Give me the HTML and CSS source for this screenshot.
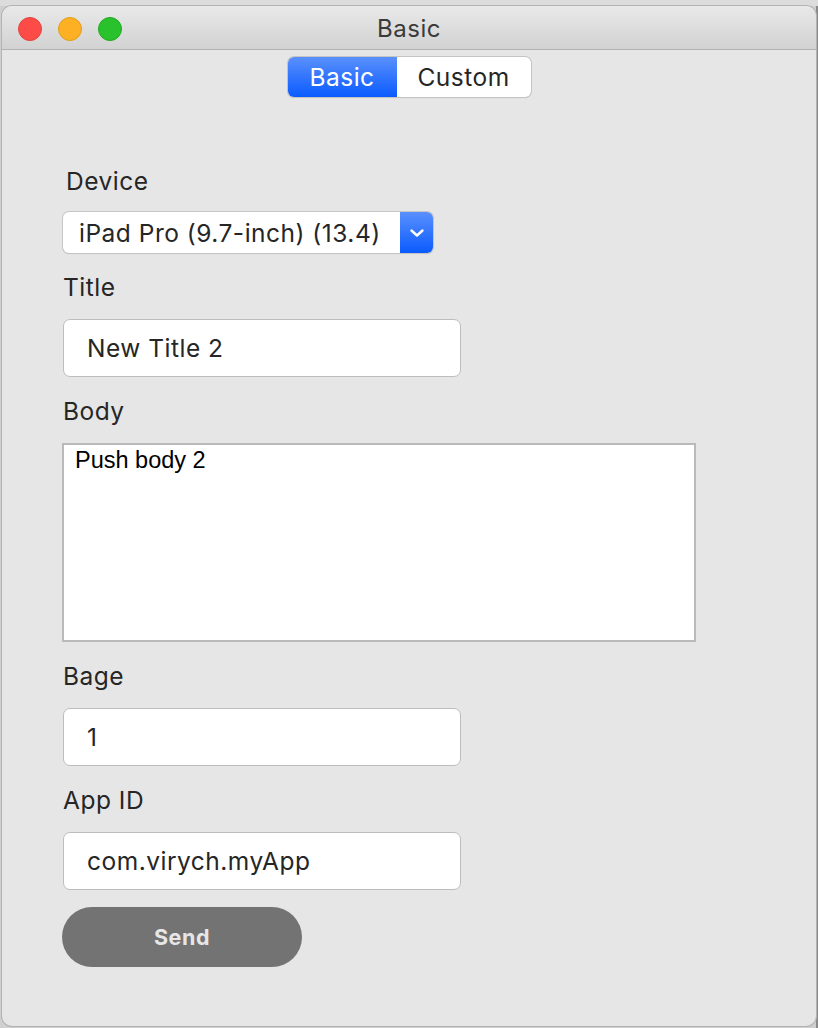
FILE: index.html
```html
<!DOCTYPE html>
<html>
<head>
<meta charset="utf-8">
<link rel="stylesheet" href="styles.css">
</head>
<body>
<div class="backdrop">
  <div class="bg-top"></div>
  <div class="window">
    <div class="titlebar">
      <div class="lights">
        <span class="light red"></span>
        <span class="light yellow"></span>
        <span class="light green"></span>
      </div>
      <div class="title">Basic</div>
    </div>
    <div class="content">
      <div class="segments">
        <div class="seg active">Basic</div>
        <div class="seg">Custom</div>
      </div>
      <form class="form">
        <div class="label label-device">Device</div>
        <div class="select">
          <div class="select-text">iPad Pro (9.7-inch) (13.4)</div>
          <div class="select-arrow">
            <svg width="16" height="10" viewBox="0 0 16 10"><path d="M2.5 2.5 L8 7.5 L13.5 2.5" fill="none" stroke="#fff" stroke-width="2.4" stroke-linecap="round" stroke-linejoin="round"/></svg>
          </div>
        </div>
        <div class="label">Title</div>
        <div class="input">New Title 2</div>
        <div class="label">Body</div>
        <div class="textarea">Push body 2</div>
        <div class="label">Bage</div>
        <div class="input">1</div>
        <div class="label">App ID</div>
        <div class="input">com.virych.myApp</div>
        <div class="send">Send</div>
      </form>
    </div>
  </div>
</div>
</body>
</html>
```
FILE: styles.css
```css
html, body {
  margin: 0;
  padding: 0;
}
body {
  width: 818px;
  height: 1028px;
  overflow: hidden;
  background: #d9d9d9;
  font-family: Inter, "Noto Sans", "Liberation Sans", sans-serif;
}
.backdrop {
  position: relative;
  width: 818px;
  height: 1028px;
  background: linear-gradient(to right, #cfcfcf 0, #cfcfcf 816px, #8a8a8a 816px);
}
.bg-top {
  position: absolute;
  left: 0;
  top: 0;
  width: 818px;
  height: 6px;
  background: #dcdcdc;
}
.window {
  position: absolute;
  left: 2px;
  top: 6px;
  width: 814px;
  height: 1020px;
  border-radius: 10px;
  background: #e6e6e6;
  overflow: hidden;
  box-shadow: 0 0 0 1px #b3b3b3;
  display: flex;
  flex-direction: column;
}
.titlebar {
  position: relative;
  height: 43px;
  flex: none;
  background: linear-gradient(#e9e9e9, #d2d2d2);
  border-bottom: 1px solid #b1b1b1;
  display: flex;
  align-items: center;
  justify-content: center;
}
.lights {
  position: absolute;
  left: 16px;
  top: 11px;
  display: flex;
  gap: 16px;
}
.light {
  width: 24px;
  height: 24px;
  border-radius: 50%;
  box-sizing: border-box;
}
.red { background: #fd4b47; border: 1px solid #e0443e; }
.yellow { background: #feb024; border: 1px solid #de9f1c; }
.green { background: #2ac22c; border: 1px solid #1eaa20; }
.title {
  font-size: 24px;
  letter-spacing: 0.5px;
  color: #3a3a3a;
  margin-top: 2px;
}
.content {
  flex: 1;
  display: flex;
  flex-direction: column;
}
.segments {
  align-self: center;
  margin-top: 7px;
  margin-left: 0;
  display: flex;
  height: 40px;
  border-radius: 6px;
  background: #fff;
  box-shadow: 0 0 0 1px #c4c4c4, 0 1px 1px rgba(0,0,0,0.18);
  overflow: hidden;
}
.seg {
  display: flex;
  align-items: center;
  justify-content: center;
  font-size: 24.5px;
  letter-spacing: 0.5px;
  color: #262626;
}
.seg.active {
  width: 109px;
  background: linear-gradient(#5a90fc, #0a5bff);
  color: #fff;
}
.seg:not(.active) {
  width: 134px;
}
.form {
  display: flex;
  flex-direction: column;
  align-items: flex-start;
  padding-left: 61px;
  margin: 0;
}
.label {
  font-size: 24.5px;
  letter-spacing: 0.5px;
  line-height: 30px;
  color: #262626;
  margin-top: 19px;
  margin-bottom: 17px;
}
.label-device {
  margin-top: 69px;
  margin-left: 3px;
  margin-bottom: 16px;
}
.select {
  display: flex;
  width: 370px;
  height: 41px;
  box-sizing: border-box;
  border-radius: 6px;
  background: #fff;
  box-shadow: 0 0 0 1px #c6c6c6, 0 1px 1px rgba(0,0,0,0.2);
  overflow: hidden;
}
.select-text {
  flex: 1;
  display: flex;
  align-items: center;
  padding-left: 16px;
  font-size: 24.5px;
  letter-spacing: 0.5px;
  color: #262626;
}
.select-arrow {
  width: 33px;
  background: linear-gradient(#5a90fc, #0a5bff);
  display: flex;
  align-items: center;
  justify-content: center;
}
.input {
  width: 398px;
  height: 58px;
  box-sizing: border-box;
  background: #fff;
  border: 1px solid #bdbdbd;
  border-radius: 7px;
  padding-left: 23px;
  display: flex;
  align-items: center;
  font-size: 24.5px;
  letter-spacing: 0.5px;
  color: #262626;
}
.textarea {
  width: 634px;
  height: 199px;
  box-sizing: border-box;
  background: #fff;
  border: 2px solid #bababa;
  margin-left: -1px;
  padding: 2px 0 0 11px;
  font-family: "Liberation Sans", Arial, sans-serif;
  font-size: 23.5px;
  letter-spacing: 0;
  line-height: 26px;
  color: #000;
}
.send {
  margin-top: 17px;
  margin-left: -1px;
  width: 240px;
  height: 60px;
  border-radius: 30px;
  background: #737373;
  color: #e6e6e6;
  font-weight: 700;
  font-size: 21.5px;
  letter-spacing: 0.6px;
  display: flex;
  align-items: center;
  justify-content: center;
}
```
